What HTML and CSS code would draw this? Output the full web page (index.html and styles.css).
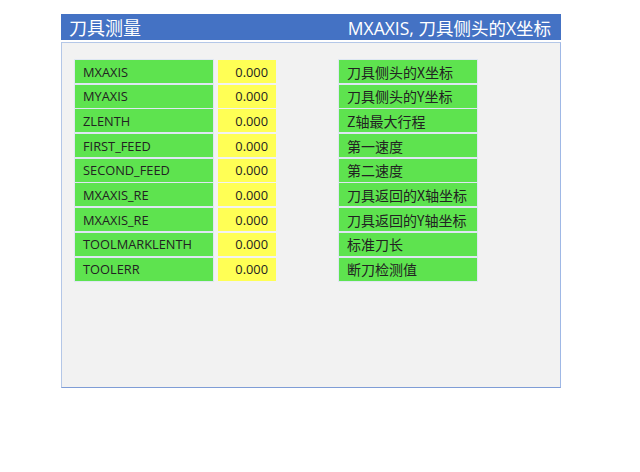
FILE: index.html
```html
<!DOCTYPE html>
<html lang="zh-CN">
<head>
    <meta charset="UTF-8">
    <meta name="viewport" content="width=device-width, initial-scale=1.0">
    <title>刀具测量</title>
    <link rel="stylesheet" href="styles.css">
</head>
<body>
    <div class="window">
        <div class="title-bar">
            <span class="title">刀具测量</span>
            <span class="hint">MXAXIS, 刀具侧头的X坐标</span>
        </div>

        <div class="panel">
            <div class="param-grid">
                <div class="cell name">MXAXIS</div>
                <div class="cell value">0.000</div>
                <div class="cell desc">刀具侧头的X坐标</div>

                <div class="cell name">MYAXIS</div>
                <div class="cell value">0.000</div>
                <div class="cell desc">刀具侧头的Y坐标</div>

                <div class="cell name">ZLENTH</div>
                <div class="cell value">0.000</div>
                <div class="cell desc">Z轴最大行程</div>

                <div class="cell name">FIRST_FEED</div>
                <div class="cell value">0.000</div>
                <div class="cell desc">第一速度</div>

                <div class="cell name">SECOND_FEED</div>
                <div class="cell value">0.000</div>
                <div class="cell desc">第二速度</div>

                <div class="cell name">MXAXIS_RE</div>
                <div class="cell value">0.000</div>
                <div class="cell desc">刀具返回的X轴坐标</div>

                <div class="cell name">MXAXIS_RE</div>
                <div class="cell value">0.000</div>
                <div class="cell desc">刀具返回的Y轴坐标</div>

                <div class="cell name">TOOLMARKLENTH</div>
                <div class="cell value">0.000</div>
                <div class="cell desc">标准刀长</div>

                <div class="cell name">TOOLERR</div>
                <div class="cell value">0.000</div>
                <div class="cell desc">断刀检测值</div>
            </div>
        </div>
    </div>
</body>
</html>
```

FILE: styles.css
```css
body {
    margin: 0;
    background-color: #fff;
    font-family: 'Open Sans', 'Noto Sans CJK SC', sans-serif;
}

.window {
    width: 500px;
    margin: 14px 0 0 61px;
}

/* Title bar */
.title-bar {
    height: 26px;
    background-color: #4472c4;
    color: #fff;
    display: flex;
    align-items: center;
    justify-content: space-between;
    padding: 0 10px 0 8px;
    font-size: 17.5px;
}

.title-bar .title {
    font-family: 'Noto Sans CJK SC', sans-serif;
    font-size: 18px;
}

/* Parameter panel */
.panel {
    margin-top: 2px;
    height: 346px;
    box-sizing: border-box;
    background-color: #f2f2f2;
    border: 1px solid #b4c7e7;
    border-bottom-color: #7f9dd6;
    border-right-color: #9fb8e6;
    padding: 17px 0 0 13px;
}

/* name | value | (spacer) description */
.param-grid {
    display: grid;
    grid-template-columns: 138px 58px 196px;
    grid-auto-rows: 23px;
    column-gap: 5px;
    row-gap: 1.7px;
}

.cell {
    display: flex;
    align-items: center;
    padding: 0 8px;
    font-size: 12.8px;
    color: #222;
    box-sizing: border-box;
    white-space: nowrap;
}

.name {
    background-color: #5ee34f;
    box-shadow: 0 0 0 1px #dfe7f3;
}

.value {
    background-color: #ffff55;
    justify-content: flex-end;
}

.desc {
    margin-left: 58px;
    background-color: #5ee34f;
    box-shadow: 0 0 0 1px #dfe7f3;
    font-family: 'Noto Sans CJK SC', sans-serif;
    font-size: 14px;
}
```
